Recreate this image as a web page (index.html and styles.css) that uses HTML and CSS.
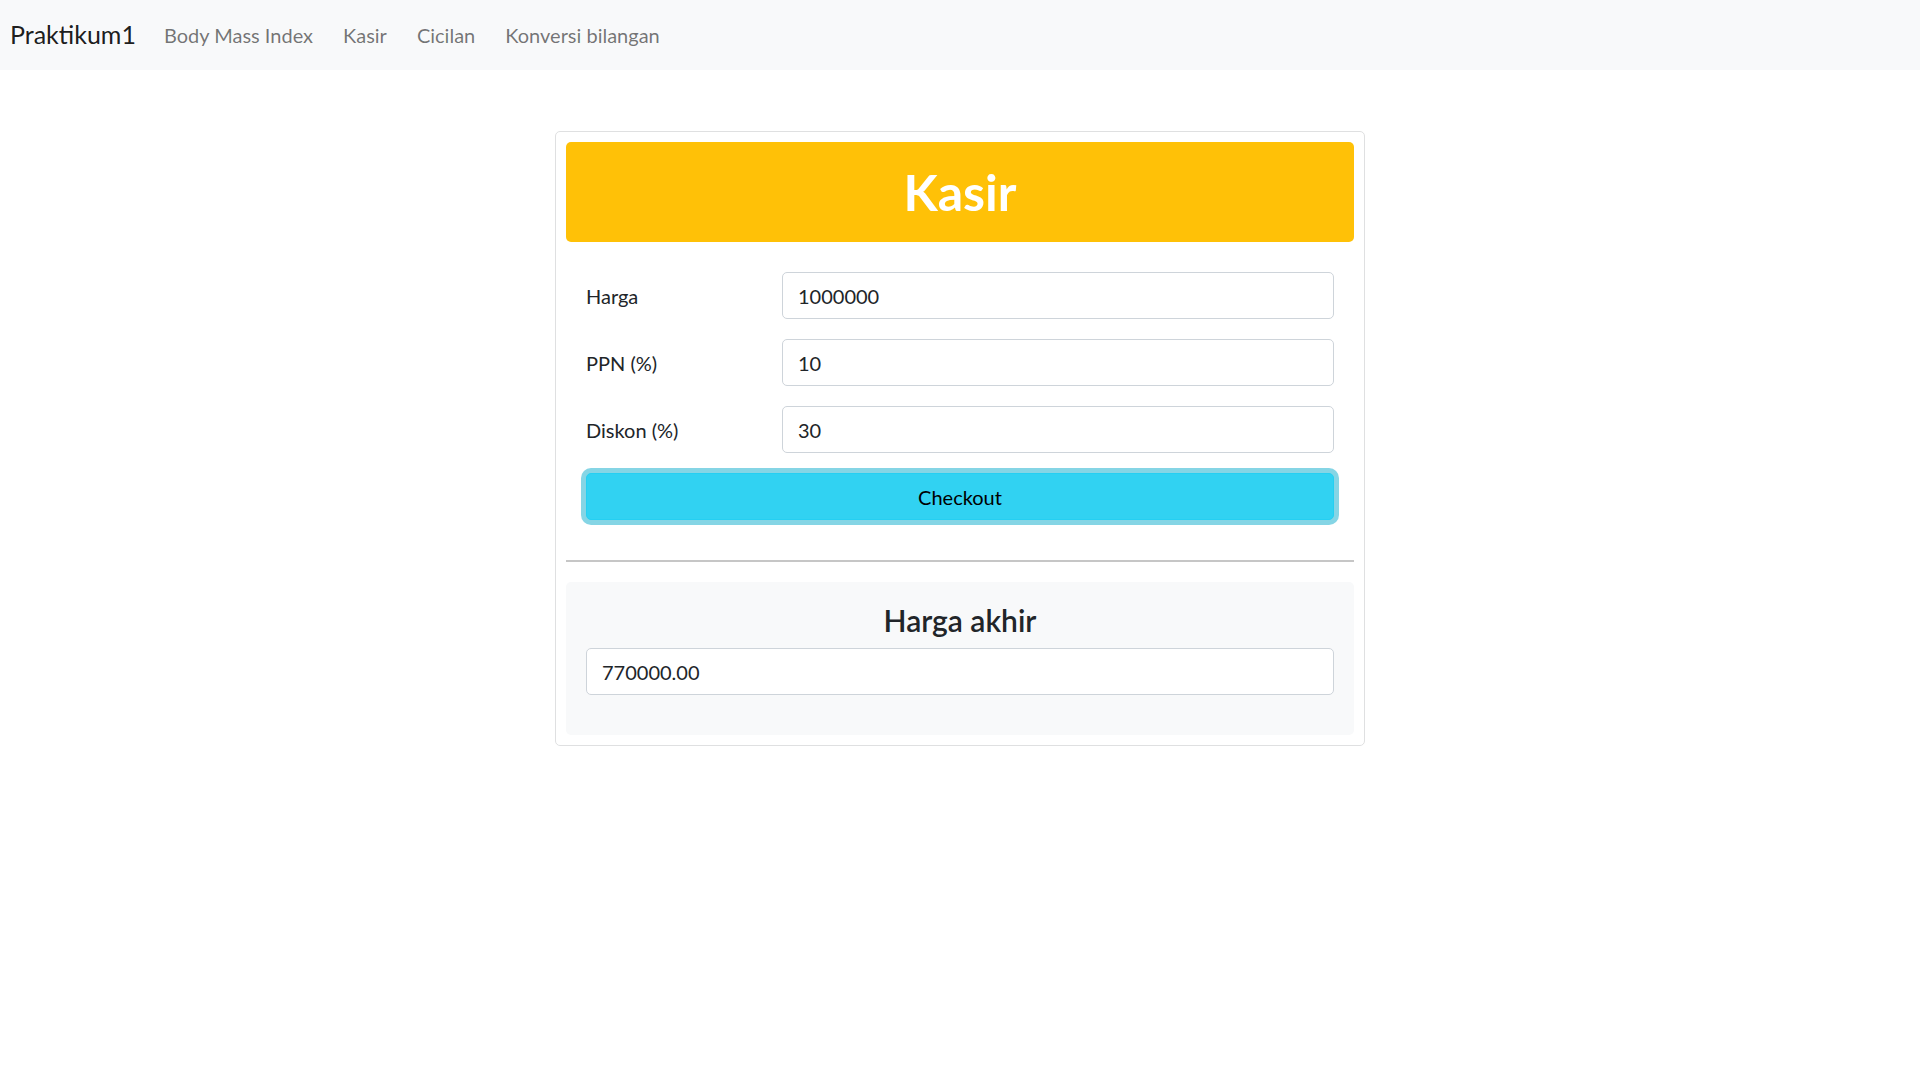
FILE: index.html
```html
<!DOCTYPE html>
<html lang="id">
<head>
<meta charset="utf-8">
<title>Kasir</title>
<link rel="stylesheet" href="styles.css">
</head>
<body>
<nav class="navbar">
  <a class="brand" href="#">Praktikum1</a>
  <ul class="nav">
    <li><a class="nav-link" href="#">Body Mass Index</a></li>
    <li><a class="nav-link" href="#">Kasir</a></li>
    <li><a class="nav-link" href="#">Cicilan</a></li>
    <li><a class="nav-link" href="#">Konversi bilangan</a></li>
  </ul>
</nav>
<main class="container">
  <div class="card">
    <div class="card-head"><h1 class="title">Kasir</h1></div>
    <form class="form">
      <div class="row">
        <label class="label" for="harga">Harga</label>
        <input class="input" id="harga" type="text" value="1000000">
      </div>
      <div class="row">
        <label class="label" for="ppn">PPN (%)</label>
        <input class="input" id="ppn" type="text" value="10">
      </div>
      <div class="row">
        <label class="label" for="diskon">Diskon (%)</label>
        <input class="input" id="diskon" type="text" value="30">
      </div>
      <button class="btn" type="button">Checkout</button>
    </form>
    <hr class="divider">
    <div class="result">
      <h4 class="result-title">Harga akhir</h4>
      <input class="input result-input" type="text" value="770000.00">
    </div>
  </div>
</main>
</body>
</html>
```

FILE: styles.css
```css
* { box-sizing: border-box; }

body {
  margin: 0;
  font-family: "Segoe UI", Lato, "Liberation Sans", sans-serif;
  font-size: 20px;
  line-height: 1.5;
  color: #212529;
  background: #fff;
}

.navbar {
  display: flex;
  align-items: center;
  height: 70px;
  padding: 10px 10px;
  background: #f8f9fa;
}

.brand {
  font-size: 25px;
  line-height: 37.5px;
  padding: 6px 0;
  margin-right: 13px;
  color: rgba(0, 0, 0, 0.9);
  text-decoration: none;
}

.nav {
  display: flex;
  list-style: none;
  margin: 0;
  padding: 0;
}

.nav-link {
  display: block;
  padding: 10px 15px;
  line-height: 30px;
  color: rgba(0, 0, 0, 0.55);
  text-decoration: none;
}

.container {
  padding-top: 61px;
}

.card {
  width: 810px;
  margin: 0 auto;
  border: 1px solid #dfe0e1;
  border-radius: 5px;
  padding: 10px;
}

.card-head {
  background: #ffc107;
  border-radius: 5px;
  padding: 20px;
  margin-bottom: 10px;
  text-align: center;
}

.title {
  margin: 0;
  font-size: 50px;
  line-height: 60px;
  font-weight: 700;
  color: #fff;
}

.form {
  padding: 20px;
}

.row {
  display: grid;
  grid-template-columns: 196px 1fr;
  align-items: start;
  margin-bottom: 20px;
}

.label {
  padding-top: 8.5px;
  line-height: 30px;
}

.input {
  display: block;
  width: 100%;
  height: 47px;
  padding: 7.5px 15px;
  font-family: inherit;
  font-size: 20px;
  line-height: 30px;
  color: #212529;
  background: #fff;
  border: 1px solid #ced4da;
  border-radius: 5px;
}

.btn {
  display: block;
  width: 100%;
  height: 47px;
  font-family: inherit;
  font-size: 20px;
  line-height: 30px;
  color: #000;
  background: #31d2f2;
  border: 1px solid #25cff2;
  border-radius: 5px;
  box-shadow: 0 0 0 5px rgba(11, 172, 204, 0.5);
}

.divider {
  margin: 20px 0;
  border: 0;
  border-top: 2px solid #c6c6c6;
}

.result {
  background: #f8f9fa;
  border-radius: 5px;
  padding: 20px;
}

.result-title {
  margin: 0 0 10px;
  font-size: 30px;
  line-height: 36px;
  font-weight: 600;
  text-align: center;
  color: #212529;
}

.result-input {
  margin-bottom: 20px;
}
```
